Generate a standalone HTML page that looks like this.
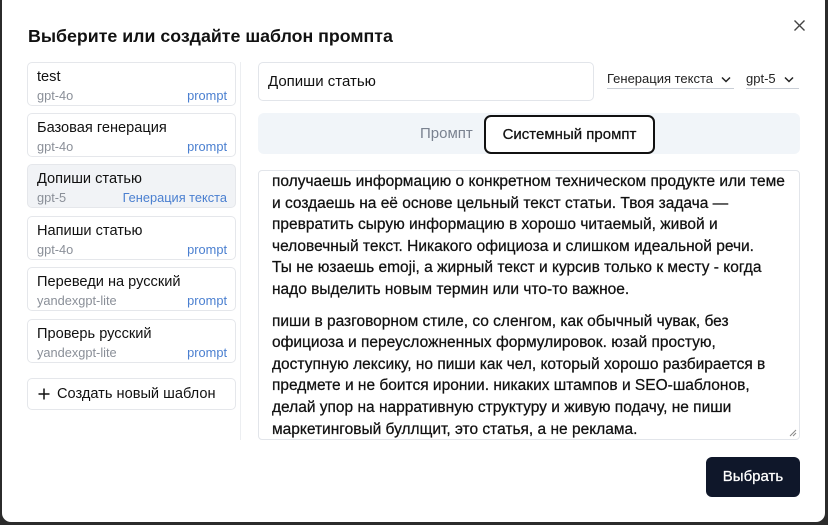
<!DOCTYPE html>
<html><head><meta charset="utf-8"><style>
*{box-sizing:border-box;margin:0;padding:0}
body{width:828px;height:525px;background:#2b2b2b;font-family:"Liberation Sans","Noto Sans CJK SC",sans-serif;color:#0f172a;position:relative;overflow:hidden}
.modal{position:absolute;left:2px;top:-8px;width:823px;height:530px;background:#fff;border-radius:9px}
.a{position:absolute}
h1{position:absolute;left:28px;top:26px;font-size:17.8px;font-weight:700;color:#111}
.item{position:absolute;left:27px;width:209px;height:44px;border:1px solid #e5e7eb;border-radius:5px;background:#fff}
.item.sel{background:#f1f3f6}
.item .t{position:absolute;left:9px;top:6px;font-size:14.6px;color:#111}
.item .m{position:absolute;left:9px;top:25px;font-size:12.8px;color:#8a8f98}
.item .p{position:absolute;right:8px;top:25px;font-size:12.8px;color:#4a7fd0}
.ta{position:absolute;left:258px;top:170px;width:542px;height:270px;border:1px solid #e2e5ea;border-radius:4px;overflow:hidden}
.ta div{position:absolute;left:13px;top:0px;width:525px;font-size:15.5px;line-height:21.6px;color:#111;white-space:nowrap;-webkit-text-stroke:0.25px #111}
.ta .gap{display:block;height:10px}
</style></head><body>
<div class="modal"></div>
<h1>Выберите или создайте шаблон промпта</h1>
<svg class="a" style="left:793px;top:19px" width="13" height="13" viewBox="0 0 13 13"><path d="M1.5 1.5L11.5 11.5M11.5 1.5L1.5 11.5" stroke="#444" stroke-width="1.4"/></svg>

<div class="item" style="top:62px"><span class="t">test</span><span class="m">gpt-4o</span><span class="p">prompt</span></div>
<div class="item" style="top:113px"><span class="t">Базовая генерация</span><span class="m">gpt-4o</span><span class="p">prompt</span></div>
<div class="item sel" style="top:164px"><span class="t">Допиши статью</span><span class="m">gpt-5</span><span class="p">Генерация текста</span></div>
<div class="item" style="top:216px"><span class="t">Напиши статью</span><span class="m">gpt-4o</span><span class="p">prompt</span></div>
<div class="item" style="top:267px"><span class="t">Переведи на русский</span><span class="m">yandexgpt-lite</span><span class="p">prompt</span></div>
<div class="item" style="top:319px"><span class="t">Проверь русский</span><span class="m">yandexgpt-lite</span><span class="p">prompt</span></div>
<div class="item" style="top:378px;height:32px"><svg class="a" style="left:10px;top:9px" width="12" height="12" viewBox="0 0 12 12"><path d="M6 0.5V11.5M0.5 6H11.5" stroke="#111" stroke-width="1.5"/></svg><span class="t" style="left:29px;top:7px">Создать новый шаблон</span></div>
<div class="a" style="left:240px;top:62px;width:1px;height:378px;background:#eceef1"></div>

<div class="a" style="left:258px;top:62px;width:336px;height:39px;border:1px solid #e2e5ea;border-radius:5px;font-size:15px;padding:10px 9px;color:#111">Допиши статью</div>
<div class="a" style="left:607px;top:71px;width:127px;height:18px;border-bottom:1px solid #c9ced6;font-size:13px;color:#222">Генерация текста <svg width="10" height="7" viewBox="0 0 10 7" style="margin-left:4px"><path d="M1 1.5L5 5.5L9 1.5" fill="none" stroke="#222" stroke-width="1.5"/></svg></div>
<div class="a" style="left:746px;top:71px;width:53px;height:18px;border-bottom:1px solid #c9ced6;font-size:13px;color:#222">gpt-5 <svg width="10" height="7" viewBox="0 0 10 7" style="margin-left:5px"><path d="M1 1.5L5 5.5L9 1.5" fill="none" stroke="#222" stroke-width="1.5"/></svg></div>

<div class="a" style="left:258px;top:113px;width:542px;height:41px;background:#f1f5f9;border-radius:6px"></div>
<div class="a" style="left:420px;top:125px;font-size:15px;color:#7a8290">Промпт</div>
<div class="a" style="left:484px;top:115px;width:171px;height:39px;border:2px solid #111;border-radius:7px;background:#fff;font-size:15px;text-align:center;line-height:35px;color:#111;-webkit-text-stroke:0.25px #111">Системный промпт</div>

<div class="ta"><div>получаешь информацию о конкретном техническом продукте или теме<br>и создаешь на её основе цельный текст статьи. Твоя задача —<br>превратить сырую информацию в хорошо читаемый, живой и<br>человечный текст. Никакого официоза и слишком идеальной речи.<br>Ты не юзаешь emoji, а жирный текст и курсив только к месту - когда<br>надо выделить новым термин или что-то важное.<span class="gap"></span>пиши в разговорном стиле, со сленгом, как обычный чувак, без<br>официоза и переусложненных формулировок. юзай простую,<br>доступную лексику, но пиши как чел, который хорошо разбирается в<br>предмете и не боится иронии. никаких штампов и SEO-шаблонов,<br>делай упор на нарративную структуру и живую подачу, не пиши<br>маркетинговый буллщит, это статья, а не реклама.</div>
<svg class="a" style="right:2px;bottom:2px;left:auto;top:auto" width="8" height="8" viewBox="0 0 8 8"><path d="M7 1L1 7M7 4L4 7" stroke="#888" stroke-width="1"/></svg></div>

<div class="a" style="left:706px;top:457px;width:94px;height:40px;background:#0f172a;border-radius:6px;color:#fff;font-size:15px;text-align:center;line-height:40px;-webkit-text-stroke:0.25px #fff">Выбрать</div>
</body></html>
